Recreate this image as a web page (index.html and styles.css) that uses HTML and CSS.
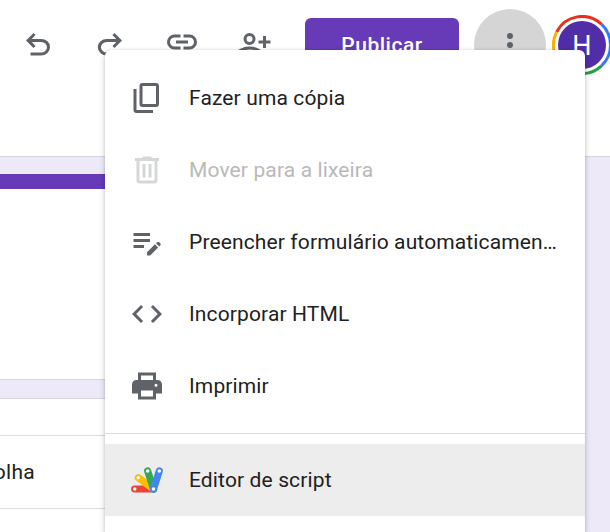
FILE: index.html
```html
<!DOCTYPE html>
<html lang="pt-BR">
<head>
<meta charset="utf-8">
<title>Formulário</title>
<link rel="stylesheet" href="styles.css">
</head>
<body>
<header class="toolbar">
  <svg class="icon" viewBox="0 -960 960 960"><path d="M280-200v-80h284q63 0 109.500-40T720-420q0-60-46.500-100T564-560H312l104 104-56 56-200-200 200-200 56 56-104 104h252q97 0 169.500 63T800-420q0 94-72.500 157T564-200H280Z"/></svg>
  <svg class="icon" viewBox="0 -960 960 960"><path d="M396-200q-97 0-169.500-63T154-420q0-94 72.500-157T396-640h252L544-744l56-56 200 200-200 200-56-56 104-104H396q-63 0-109.500 40T240-420q0 60 46.500 100T396-280h284v80H396Z"/></svg>
  <svg class="icon icon-link" viewBox="0 0 24 24"><path d="M11 17H7a5 5 0 0 1 0-10h4v2H7a3 3 0 0 0 0 6h4zM8 13v-2h8v2zM13 17v-2h4a3 3 0 0 0 0-6h-4V7h4a5 5 0 0 1 0 10z"/></svg>
  <svg class="icon" viewBox="0 0 24 24"><path d="M18 14v-3h-3V9h3V6h2v3h3v2h-3v3z"/><circle class="line" cx="9" cy="8" r="3"/><path class="line" d="M2 19v-1.800c0-.8.400-1.400 1.100-1.700C5 14.500 7 14 9 14s4 .5 5.900 1.500c.7.300 1.100.9 1.100 1.700V19z"/></svg>
  <button class="publish">Publicar</button>
  <button class="more" aria-label="Mais"><svg class="icon" viewBox="0 0 24 24"><circle cx="12" cy="6" r="2"/><circle cx="12" cy="12" r="2"/><circle cx="12" cy="18" r="2"/></svg></button>
  <div class="account">
    <svg class="ring" viewBox="0 0 60 60">
      <path stroke="#ea2f1d" d="M4.600 17A28.500 28.500 0 0 1 49.500 9.200"/>
      <path stroke="#3279f5" d="M49.500 9.200A28.500 28.500 0 0 1 49.500 50.800"/>
      <path stroke="#25a046" d="M49.500 50.800A28.500 28.500 0 0 1 10 50.500"/>
      <path stroke="#fbb003" d="M10 50.500A28.500 28.500 0 0 1 4.600 17"/>
    </svg>
    <span class="avatar">H</span>
  </div>
</header>
<main class="form">
  <section class="card title-card"></section>
  <section class="card question-card">
    <div class="type"><span>olha</span></div>
  </section>
</main>
<nav class="menu">
  <a class="item"><svg class="icon" viewBox="0 0 24 24"><rect class="line" x="8" y="3" width="11" height="14" rx="1"/><path class="line" d="M4 6V20a1 1 0 0 0 1 1h11"/></svg><span>Fazer uma cópia</span></a>
  <a class="item disabled"><svg class="icon" viewBox="0 0 24 24"><path d="M4 4h4.500l1-1h5l1 1H20v2H4z"/><path class="line" d="M6 5v14a1 1 0 0 0 1 1h10a1 1 0 0 0 1-1V5"/><path d="M9 8h2v9H9zM13 8h2v9h-2z"/></svg><span>Mover para a lixeira</span></a>
  <a class="item"><svg class="icon" viewBox="0 0 24 24"><path d="M3 6H14v2H3zM3 10H14v2H3zM3 14H10v2H3zM18.010 12.870l.71-.71a1 1 0 0 1 1.410 0l.71.71a1 1 0 0 1 0 1.410l-.71.71zM17.300 13.580L12 18.880V21h2.120l5.300-5.300z"/></svg><span>Preencher formulário automaticamente</span></a>
  <a class="item"><svg class="icon" viewBox="0 0 24 24"><path d="M9.400 16.600 4.800 12l4.600-4.600L8 6l-6 6 6 6zM14.600 16.600l4.600-4.600-4.600-4.600L16 6l6 6-6 6z"/></svg><span>Incorporar HTML</span></a>
  <a class="item"><svg class="icon" viewBox="0 0 24 24"><path fill-rule="evenodd" d="M18 8V3H6v5H5a3 3 0 0 0-3 3v6h4v4h12v-4h4v-6a3 3 0 0 0-3-3zM8 5h8v3H8zM16 19H8v-4h8zM18 12.500a1 1 0 1 1 0-2 1 1 0 0 1 0 2z"/></svg><span>Imprimir</span></a>
  <hr class="divider">
  <a class="item active"><svg class="icon script" viewBox="0 0 36 36">
    <path stroke="#ea4335" d="M24.500 27H5.700"/><path stroke="#fbbc04" d="M24.500 27 9.300 15.700"/><path stroke="#34a853" d="M24.500 27 18.700 9"/><path stroke="#4285f4" d="M24.500 27 30.300 9"/>
    <g fill="#fff"><circle cx="5.700" cy="27" r="1.800"/><circle cx="9.300" cy="15.700" r="1.800"/><circle cx="18.700" cy="9" r="1.800"/><circle cx="30.300" cy="9" r="1.800"/><circle cx="24.500" cy="27" r="1.800"/></g>
  </svg><span>Editor de script</span></a>
</nav>
</body>
</html>
```
FILE: styles.css
```css
* { box-sizing: border-box; }
body {
  margin: 0;
  width: 610px;
  height: 532px;
  overflow: hidden;
  position: relative;
  background: #eee9f8;
  font: 21px/30px Roboto, sans-serif;
  letter-spacing: 0.3px;
  color: #212121;
}
button { border: 0; padding: 0; font: inherit; letter-spacing: inherit; }
.icon { width: 36px; height: 36px; flex: none; fill: #5f6368; }
.line { fill: none; stroke: #5f6368; stroke-width: 2; }
.toolbar {
  height: 157px;
  padding: 9px 0 0 20px;
  display: flex;
  align-items: flex-start;
  background: #fff;
  border-bottom: 1px solid #d6d7dc;
}
.toolbar > .icon { margin: 18px 36px 0 0; }
.toolbar > .icon-link { margin-top: 15px; }
.publish {
  width: 154px;
  height: 54px;
  flex: none;
  margin: 9px 15px 0 -3px;
  border-radius: 6px;
  background: #673ab7;
  color: #fff;
  font-weight: 500;
  letter-spacing: 0.5px;
}
.more {
  width: 72px;
  height: 72px;
  flex: none;
  border-radius: 50%;
  background: #d5d5d5;
  display: grid;
  place-items: center;
}
.account {
  width: 60px;
  height: 60px;
  flex: none;
  margin: 6px 0 0 6px;
  display: grid;
  place-items: center;
}
.account > * { grid-area: 1 / 1; }
.ring { width: 60px; height: 60px; fill: none; stroke-width: 3; }
.avatar {
  width: 48px;
  height: 48px;
  border-radius: 50%;
  background: #512da8;
  color: #fff;
  font-size: 27px;
  line-height: 50px;
  text-align: center;
  letter-spacing: 0;
}
.form { width: 500px; padding-top: 17px; }
.card { background: #fff; }
.title-card { height: 206px; border-top: 15px solid #673ab7; border-bottom: 1px solid #d6d7dc; }
.question-card { height: 134px; margin-top: 18px; padding-top: 36px; border-top: 1px solid #d6d7dc; }
.type {
  height: 74px;
  border: solid #dadce0;
  border-width: 1px 0;
  display: flex;
  align-items: center;
}
.type span { width: 35px; display: flex; justify-content: flex-end; }
.menu {
  position: absolute;
  left: 105px;
  top: 50px;
  width: 480px;
  height: 482px;
  padding-top: 12px;
  background: #fff;
  border-radius: 6px 6px 0 0;
  box-shadow: 0 3px 6px rgba(0, 0, 0, .2), 0 0 3px rgba(0, 0, 0, .12);
  letter-spacing: 0.13px;
}
.item {
  height: 72px;
  padding: 0 27px 0 24px;
  display: flex;
  align-items: center;
  gap: 24px;
}
.item span { flex: 1; overflow: hidden; text-overflow: ellipsis; white-space: nowrap; }
.disabled { color: #b9b9b9; }
.disabled .icon { fill: #d6d7d8; }
.disabled .line { stroke: #d6d7d8; }
.active { background: #ededed; }
.script { stroke-width: 7.2; stroke-linecap: round; }
.script g { stroke: none; }
.divider { height: 1px; margin: 11px 0 10px; border: 0; background: #dadce0; }
```
